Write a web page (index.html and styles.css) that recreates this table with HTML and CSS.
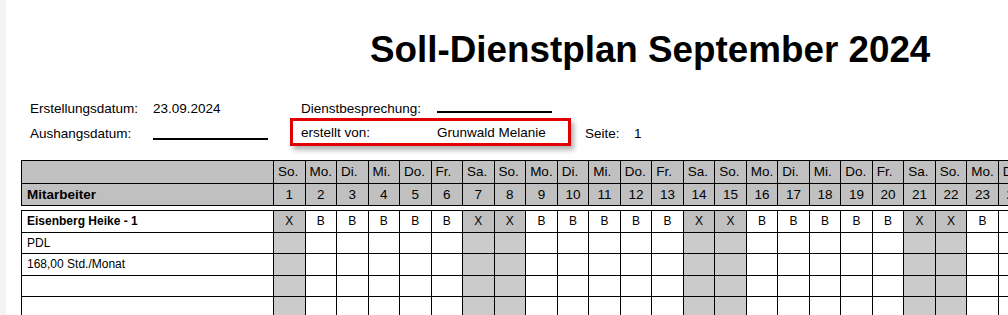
FILE: index.html
```html
<!DOCTYPE html>
<html lang="de">
<head>
<meta charset="utf-8">
<title>Soll-Dienstplan September 2024</title>
<link rel="stylesheet" href="styles.css">
</head>
<body>
<div class="page">
  <h1 class="title">Soll-Dienstplan September 2024</h1>

  <div class="info">
    <div class="info-row">
      <span class="lbl">Erstellungsdatum:</span>
      <span class="val">23.09.2024</span>
      <span class="lbl2">Dienstbesprechung:</span>
      <span class="blank"></span>
    </div>
    <div class="info-row">
      <span class="lbl">Aushangsdatum:</span>
      <span class="val"><span class="blank"></span></span>
      <span class="marked">
        <span class="lbl2 in">erstellt von:</span>
        <span class="author">Grunwald Melanie</span>
      </span>
      <span class="seite">Seite:</span>
      <span class="page-no">1</span>
    </div>
  </div>

  <div class="grid head" id="head">
    <div class="c name"></div>
  </div>
  <div class="grid body" id="body"></div>
</div>
<script src="app.js"></script>
</body>
</html>
```

FILE: app.js
```js
const names = ["So.","Mo.","Di.","Mi.","Do.","Fr.","Sa."];
const head = document.getElementById("head");
const body = document.getElementById("body");
let h1 = "", h2 = '<div class="c name mit">Mitarbeiter</div>';
for (let d = 1; d <= 30; d++) {
  h1 += '<div class="c dn">' + names[(d - 1) % 7] + '</div>';
  h2 += '<div class="c num">' + d + '</div>';
}
head.insertAdjacentHTML("beforeend", h1 + h2);
const labels = ['<b>Eisenberg Heike - 1</b>', 'PDL', '168,00 Std./Monat', '', ''];
let b = "";
labels.forEach((lab, r) => {
  b += '<div class="c name">' + lab + '</div>';
  for (let d = 1; d <= 30; d++) {
    const wd = (d - 1) % 7;
    const we = wd === 0 || wd === 6;
    let cls = "c day";
    if (we) cls += r === 0 ? " we-x" : " we";
    const txt = r === 0 ? (we ? "X" : "B") : "";
    b += '<div class="' + cls + '">' + txt + '</div>';
  }
});
body.innerHTML = b;
```

FILE: styles.css
```css
html, body {
  margin: 0;
  padding: 0;
  background: #fff;
  overflow: hidden;
}
body {
  font-family: "Liberation Sans", Arial, sans-serif;
  color: #000;
  width: 1008px;
  height: 315px;
}
.page {
  border-left: 6px solid #f3f3f3;
  height: 315px;
  box-sizing: border-box;
  padding-left: 15px;
}
.title {
  margin: 0;
  padding: 32px 0 0 349px;
  font-size: 36.8px;
  line-height: 36.5px;
  font-weight: bold;
  white-space: nowrap;
}
.info {
  margin-top: 29px;
  padding-left: 9px;
  font-size: 13.5px;
}
.info-row {
  display: flex;
  align-items: baseline;
  line-height: 21px;
  white-space: nowrap;
}
.lbl { width: 123px; }
.val { width: 148px; }
.lbl2 { width: 136px; }
.blank {
  display: inline-block;
  width: 115px;
  height: 2px;
  background: #000;
  vertical-align: -2px;
}
.marked {
  display: flex;
  align-items: baseline;
  margin-left: -11px;
  width: 259px;
  padding: 2px 8px 1px 8px;
  line-height: 19px;
  border: 3px solid #e00000;
  box-shadow: 3px 4px 5px rgba(0, 0, 0, 0.3);
  position: relative;
  top: -1px;
}
.marked .in { width: 136px; }
.seite { margin-left: 14px; width: 49px; }

.grid {
  display: grid;
  grid-template-columns: 251px repeat(30, 30.53px);
  gap: 1px;
  padding: 1px;
  background: #000;
  width: max-content;
}
.head {
  margin-top: 13px;
  grid-template-rows: 22px 21px;
}
.body {
  margin-top: 4px;
  grid-template-rows: 21px 20px 21px 20px 21px;
}
.c {
  background: #fff;
  font-size: 12px;
  line-height: 20px;
  overflow: hidden;
  white-space: nowrap;
}
.head .c {
  background: #c0c0c0;
  font-size: 13.5px;
  line-height: 22px;
}
.head .dn { padding-left: 4px; }
.head .num { text-align: center; line-height: 21px; }
.head .mit {
  font-weight: bold;
  padding-left: 5px;
  line-height: 21px;
}
.body .name { padding-left: 5px; line-height: 21px; }
.body .day { text-align: center; line-height: 21px; }
.body .we { background: #cbcbcb; }
.body .we-x { background: #c0c0c0; }
```
